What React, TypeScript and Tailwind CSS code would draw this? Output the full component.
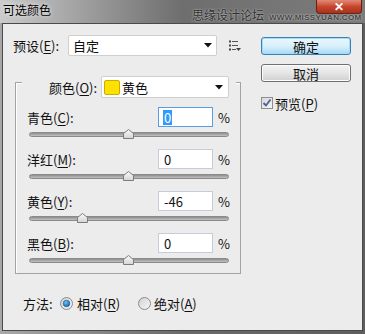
import React from "react";

const U = ({ c }: { c: string }) => (
  <span className="underline underline-offset-[2px] decoration-1">{c}</span>
);

const Arrow = () => (
  <svg width="8" height="5" viewBox="0 0 8 5" className="shrink-0">
    <path d="M0 0 H8 L4 4.5 Z" fill="#111" />
  </svg>
);

const Thumb = () => (
  <svg width="11" height="10" viewBox="0 0 11 10">
    <defs>
      <linearGradient id="tg" x1="0" y1="0" x2="0" y2="1">
        <stop offset="0" stopColor="#fbfbfb" />
        <stop offset="1" stopColor="#d4d4d4" />
      </linearGradient>
    </defs>
    <path d="M5.5 0.5 L10.5 4.5 L10.5 9.5 L0.5 9.5 L0.5 4.5 Z" fill="url(#tg)" stroke="#7c7c7c" />
  </svg>
);

const Slider = ({ value }: { value: number }) => (
  <div className="relative mt-[2px] ml-[2px] w-[200px] h-[10px]">
    <div className="absolute left-0 right-0 top-[3px] h-[5px] rounded-full bg-gradient-to-b from-[#8e8e8e] to-[#c2c2c2] border border-[#8a8a8a]" />
    <div className="absolute top-0" style={{ left: 94 + value }}>
      <Thumb />
    </div>
  </div>
);

type RowProps = { label: React.ReactNode; value: string; focused?: boolean; slider: number };

const Row = ({ label, value, focused, slider }: RowProps) => (
  <div className="flex flex-col">
    <div className="flex items-center h-[20px]">
      <div className="w-[131px] text-[13px] leading-none text-[#111]">{label}</div>
      <div
        className={
          focused
            ? "w-[55px] h-[20px] bg-white border border-[#569de5] flex items-center pl-[4px] text-[13px] leading-none"
            : "w-[55px] h-[20px] bg-white border border-[#c5ced8] flex items-center pl-[4px] text-[13px] leading-none"
        }
      >
        {focused ? (
          <span className="bg-[#3399ff] text-white px-[1px] py-[1px]">{value}</span>
        ) : (
          <span className="pl-[1px]">{value}</span>
        )}
      </div>
      <div className="ml-[5px] text-[13px] leading-none">%</div>
    </div>
    <Slider value={slider} />
  </div>
);

const Radio = ({ on }: { on?: boolean }) => (
  <svg width="13" height="13" viewBox="0 0 13 13" className="shrink-0">
    <defs>
      <linearGradient id="rg" x1="0" y1="0" x2="1" y2="1">
        <stop offset="0" stopColor="#d0d0d0" />
        <stop offset="1" stopColor="#f8f8f8" />
      </linearGradient>
      <radialGradient id="rd" cx="0.4" cy="0.35" r="0.7">
        <stop offset="0" stopColor="#6fc3f5" />
        <stop offset="1" stopColor="#0b5fa8" />
      </radialGradient>
    </defs>
    <circle cx="6.5" cy="6.5" r="6" fill="url(#rg)" stroke="#8b8b8b" />
    {on && <circle cx="6.5" cy="6.5" r="3.3" fill="url(#rd)" stroke="#245c8f" strokeWidth="0.6" />}
  </svg>
);

export default function App() {
  return (
    <div className="w-[365px] h-[334px] flex flex-col bg-gradient-to-r from-[#a8a8a8] via-[#6a6a6a] to-[#5e5e5e] font-['Noto_Sans_CJK_SC','Liberation_Sans',sans-serif] text-[#111] overflow-hidden">
      {/* title bar */}
      <div className="relative h-[23px] flex items-start bg-gradient-to-r from-[#cbcbcb] via-[#6e6e6e] to-[#7c7c7c]">
        <div className="pl-[3px] pt-[3px] text-[12px] leading-[14px] text-black [text-shadow:0_0_4px_#ffffff]">
          可选颜色
        </div>
        <div className="ml-auto mr-[3px] w-[46px] h-[14px] rounded-b-[4px] border border-t-0 border-[#6b1f12] bg-gradient-to-b from-[#e08a78] via-[#c9452c] to-[#a8321c] flex items-center justify-center">
          <span className="text-white text-[12px] font-bold leading-none font-['Liberation_Sans',sans-serif]">✕</span>
        </div>
        <div className="absolute left-[192px] top-[8px] flex items-end gap-[5px]">
          <span className="text-[12px] leading-[14px] text-[#2f2f2f] [text-shadow:0_0_2px_#dcdcdc]">思缘设计论坛</span>
          <span className="text-[8px] leading-[9px] font-bold tracking-[0.3px] text-[#444] [text-shadow:0_0_2px_#e8e8e8] font-['Liberation_Sans',sans-serif]">
            WWW.MISSYUAN.COM
          </span>
        </div>
      </div>

      {/* content */}
      <div className="flex-1 mx-[2px] mb-[3px] border border-[#4a4a4a] bg-[#ececec] flex">
        {/* left column */}
        <div className="w-[258px] pl-[10px] flex flex-col">
          <div className="mt-[11px] h-[21px] flex items-center">
            <div className="w-[55px] text-[13px] leading-none">
              预设(<U c="E" />):
            </div>
            <div className="w-[149px] h-[21px] bg-white border border-[#cfcfcf] rounded-[2px] flex items-center pl-[4px] pr-[4px] text-[13px] leading-none">
              <span>自定</span>
              <span className="ml-auto">
                <Arrow />
              </span>
            </div>
            <svg width="12" height="11" viewBox="0 0 12 11" className="ml-[12px]">
              <rect x="0" y="0.5" width="2" height="2" fill="#444" />
              <rect x="0" y="4.5" width="2" height="2" fill="#444" />
              <rect x="0" y="8.5" width="2" height="2" fill="#444" />
              <rect x="3" y="1" width="6" height="1" fill="#555" />
              <rect x="3" y="5" width="6" height="1" fill="#555" />
              <rect x="3" y="9" width="4" height="1" fill="#555" />
              <path d="M7 8 H12 L9.5 11 Z" fill="#444" />
            </svg>
          </div>

          {/* group box */}
          <div className="mt-[26px] ml-[2px] w-[226px] border border-[#a3a3a3] shadow-[inset_1px_1px_0_#ffffff] flex flex-col pb-[8px]">
            <div className="-mt-[7px] ml-[6px] mr-[4px] h-[22px] bg-[#ececec] flex items-center pl-[27px]">
              <div className="w-[52px] text-[13px] leading-none">
                颜色(<U c="O" />):
              </div>
              <div className="w-[128px] h-[22px] bg-white border border-[#cfcfcf] rounded-[2px] flex items-center pl-[2px] pr-[5px] text-[13px] leading-none">
                <div className="w-[16px] h-[15px] bg-[#ffe100] border border-[#c9ad00] rounded-[2px]" />
                <span className="ml-[2px]">黄色</span>
                <span className="ml-auto">
                  <Arrow />
                </span>
              </div>
            </div>
            <div className="mt-[9px] pl-[11px] flex flex-col gap-[10px]">
              <Row label={<>青色(<U c="C" />):</>} value="0" focused slider={0} />
              <Row label={<>洋红(<U c="M" />):</>} value="0" slider={0} />
              <Row label={<>黄色(<U c="Y" />):</>} value="-46" slider={-46} />
              <Row label={<>黑色(<U c="B" />):</>} value="0" slider={0} />
            </div>
          </div>

          {/* method */}
          <div className="mt-[21px] h-[16px] pl-[10px] flex items-center text-[13px] leading-none">
            <div className="w-[37px]">方法:</div>
            <Radio on />
            <span className="ml-[4px] w-[61px]">
              相对(<U c="R" />)
            </span>
            <Radio />
            <span className="ml-[3px]">
              绝对(<U c="A" />)
            </span>
          </div>
        </div>

        {/* right column */}
        <div className="w-[90px] pt-[13px] flex flex-col">
          <div className="h-[18px] rounded-[3px] border border-[#3c7fb1] bg-gradient-to-b from-[#eaf6fd] via-[#d9f0fc] to-[#a7d9f5] shadow-[inset_0_0_0_1px_#9ee0fb] flex items-center justify-center text-[13px] leading-none">
            确定
          </div>
          <div className="mt-[9px] h-[18px] rounded-[3px] border border-[#707070] bg-gradient-to-b from-[#f2f2f2] via-[#e6e6e6] to-[#cfcfcf] shadow-[inset_0_0_0_1px_#fcfcfc] flex items-center justify-center text-[13px] leading-none">
            取消
          </div>
          <div className="mt-[15px] h-[12px] flex items-center">
            <svg width="12" height="12" viewBox="0 0 12 12" className="shrink-0">
              <defs>
                <linearGradient id="cb" x1="0" y1="0" x2="1" y2="1">
                  <stop offset="0" stopColor="#d8d8d8" />
                  <stop offset="1" stopColor="#f6f6f6" />
                </linearGradient>
              </defs>
              <rect x="0.5" y="0.5" width="11" height="11" fill="url(#cb)" stroke="#8e8f8f" />
              <path d="M2.5 6 L5 8.5 L9.5 2.5" fill="none" stroke="#4a5f97" strokeWidth="1.8" />
            </svg>
            <span className="ml-[2px] text-[13px] leading-none">
              预览(<U c="P" />)
            </span>
          </div>
        </div>
      </div>
    </div>
  );
}
